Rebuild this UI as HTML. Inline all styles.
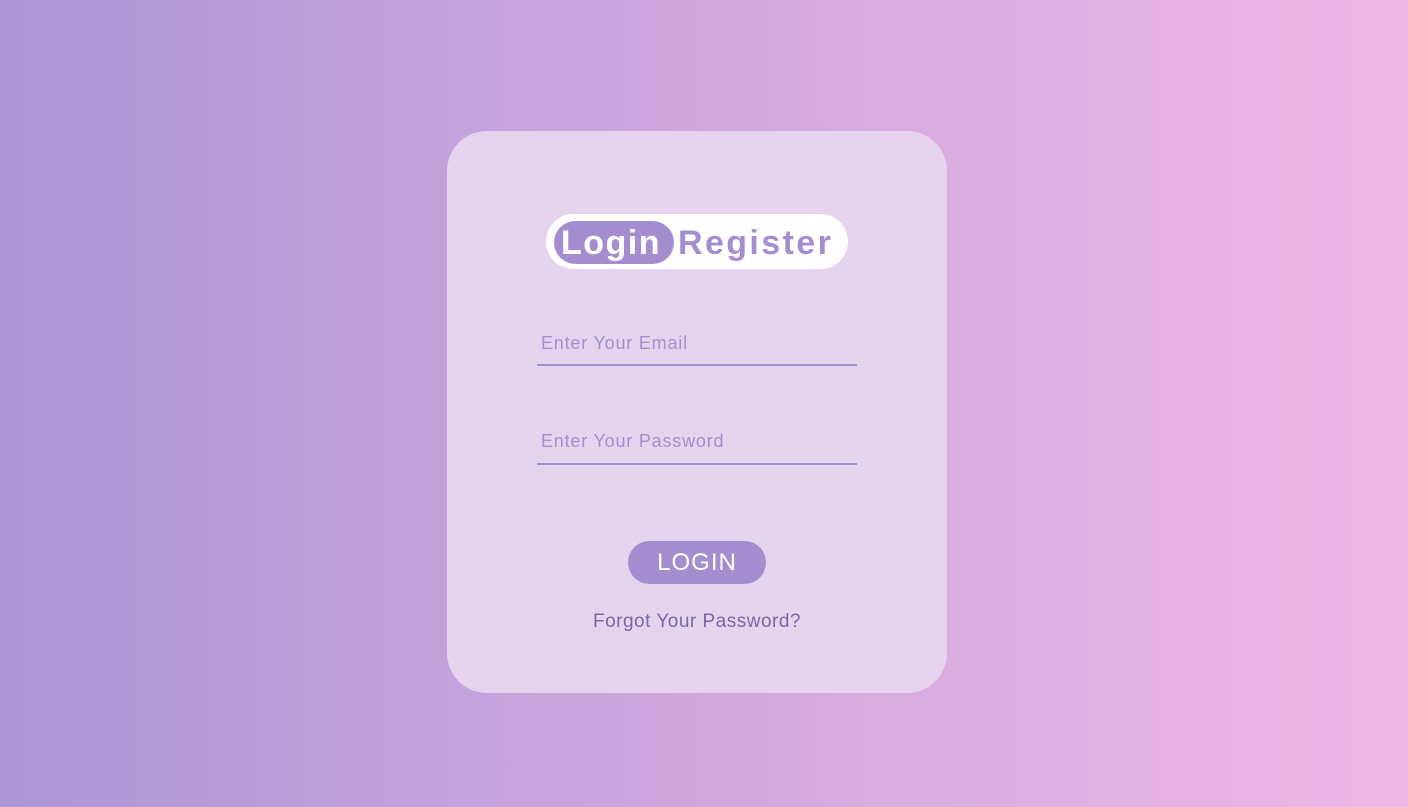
<!DOCTYPE html>
<html><head><style>
*{margin:0;padding:0;box-sizing:border-box}
body{width:1408px;height:807px;overflow:hidden;background:linear-gradient(90deg,#ad96d6 0%,#d6abdf 60%,#eeb8e6 100%);font-family:"Liberation Sans",sans-serif;position:relative}
.card{position:absolute;left:447px;top:131px;width:500px;height:562px;border-radius:40px;background:#e6d3ee}
.tog{position:absolute;left:99px;top:83px;width:302px;height:55px;border-radius:28px;background:#fff}
.lp{position:absolute;left:8px;top:7px;width:120px;height:43px;border-radius:22px;background:#a58ed0}
.t{position:absolute;top:9px;font-weight:bold;font-size:34px;letter-spacing:1.5px;line-height:40px}
.in{position:absolute;left:90px;width:320px;height:2px;background:#a58ed0}
.ph{position:absolute;left:94px;font-size:18px;color:#a58ed0;letter-spacing:0.8px}
.btn{position:absolute;left:181px;top:410px;width:138px;height:43px;border-radius:22px;background:#a58ed0;color:#fff;font-size:24px;text-align:center;line-height:44px;letter-spacing:1px}
.fg{position:absolute;left:0;width:500px;text-align:center;top:480px;font-size:19px;color:#7e66a6;letter-spacing:0.5px}
</style></head><body>
<div class="card">
<div class="tog"><div class="lp"></div>
<div class="t" style="left:15px;color:#fff">Login</div>
<div class="t" style="left:132px;color:#a58ed0;letter-spacing:2.4px">Register</div></div>
<div class="ph" style="top:202px">Enter Your Email</div>
<div class="in" style="top:233px"></div>
<div class="ph" style="top:300px">Enter Your Password</div>
<div class="in" style="top:332px"></div>
<div class="btn">LOGIN</div>
<div class="fg">Forgot Your Password?</div>
</div>
</body></html>
